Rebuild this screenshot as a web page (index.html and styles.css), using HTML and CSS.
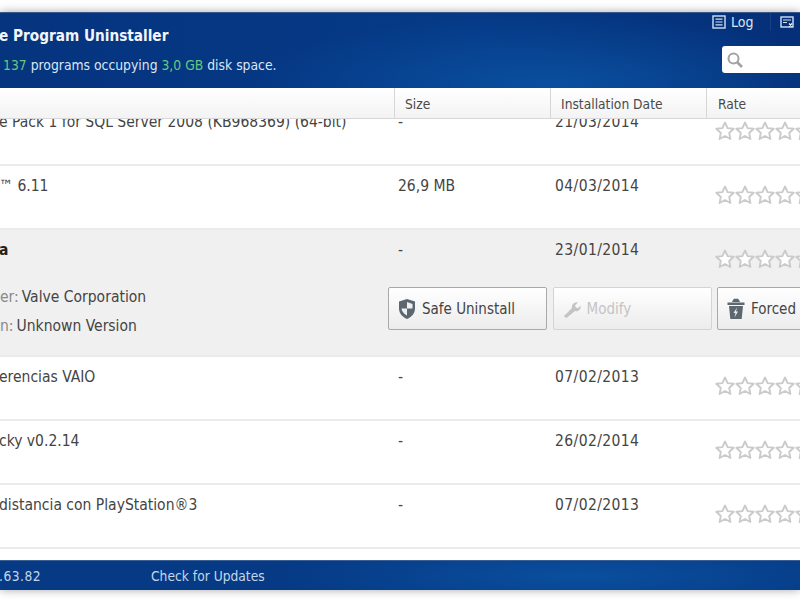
FILE: index.html
```html
<!DOCTYPE html>
<html lang="en">

<head>
    <meta charset="UTF-8">
    <title>Program Uninstaller</title>
    <link rel="stylesheet" href="styles.css">
</head>

<body>
    <svg class="sprites" width="0" height="0">
        <symbol id="star" viewBox="0 0 20 20">
            <path d="M10 1.500l2.600 5.600 6.100.7-4.500 4.200 1.200 6L10 15l-5.400 3 1.200-6-4.500-4.200 6.100-.7z" fill="#fff" stroke="#cbcbcb" stroke-width="1.900" stroke-linejoin="round" />
        </symbol>
    </svg>
    <div class="window">
        <header class="header">
            <div class="header-text">
                <h1>e Program Uninstaller</h1>
                <p><b>137</b> programs occupying <b>3,0 GB</b> disk space.</p>
            </div>
            <div class="header-tools">
                <div class="tool-links">
                    <span class="tool-link">
                        <svg width="14" height="14" viewBox="0 0 14 14">
                            <rect x="1" y="1" width="12" height="12" fill="none" stroke="#cfe0f2" stroke-width="1.400" />
                            <path d="M3.500 4.200h7M3.500 7h7M3.500 9.800h7" stroke="#cfe0f2" stroke-width="1.200" />
                        </svg>
                        Log
                    </span>
                    <span class="tool-sep"></span>
                    <svg width="14" height="13" viewBox="0 0 14 13">
                        <rect x="1" y="1" width="12" height="10" fill="none" stroke="#cfe0f2" stroke-width="1.400" />
                        <path d="M3 4h8M3 6.500h4" stroke="#cfe0f2" stroke-width="1.200" />
                        <path d="M9 7.500l3 3M12 7.500l-3 3" stroke="#fff" stroke-width="1.200" />
                    </svg>
                </div>
                <div class="search">
                    <svg width="18" height="18" viewBox="0 0 18 18">
                        <circle cx="7.500" cy="7.500" r="5" fill="none" stroke="#a3a3a3" stroke-width="2" />
                        <path d="M11 11l5 5" stroke="#a3a3a3" stroke-width="2.600" />
                    </svg>
                </div>
            </div>
        </header>

        <div class="columns">
            <div class="col-name"></div>
            <div class="col-head">Size</div>
            <div class="col-head">Installation Date</div>
            <div class="col-head">Rate</div>
        </div>

        <div class="list">
            <div class="row row-first">
                <div class="cell-name">e Pack 1 for SQL Server 2008 (KB968369) (64-bit)</div>
                <div class="cell-size">-</div>
                <div class="cell-date">21/03/2014</div>
                <div class="stars"><svg><use href="#star" /></svg><svg><use href="#star" /></svg><svg><use href="#star" /></svg><svg><use href="#star" /></svg><svg><use href="#star" /></svg></div>
            </div>
            <div class="row">
                <div class="cell-name">™ 6.11</div>
                <div class="cell-size">26,9 MB</div>
                <div class="cell-date">04/03/2014</div>
                <div class="stars"><svg><use href="#star" /></svg><svg><use href="#star" /></svg><svg><use href="#star" /></svg><svg><use href="#star" /></svg><svg><use href="#star" /></svg></div>
            </div>
            <div class="row row-open">
                <div class="cell-name cell-bold">a</div>
                <div class="cell-size">-</div>
                <div class="cell-date">23/01/2014</div>
                <div class="stars"><svg><use href="#star" /></svg><svg><use href="#star" /></svg><svg><use href="#star" /></svg><svg><use href="#star" /></svg><svg><use href="#star" /></svg></div>
                <div class="details">
                    <div><span class="label">er:</span>Valve Corporation</div>
                    <div><span class="label">n:</span>Unknown Version</div>
                </div>
                <div class="actions">
                    <button class="action">
                        <svg width="20" height="22" viewBox="0 0 20 22">
                            <path d="M10 1l8 2.500v7c0 5-3.500 8.500-8 10.500-4.500-2-8-5.500-8-10.500v-7z" fill="#5d6770" />
                            <path d="M10 4v6.500h5.500v-4.500zM10 10.500H4.500c.3 3 2.500 5.500 5.500 7z" fill="#eef0f1" />
                        </svg>
                        Safe Uninstall
                    </button>
                    <button class="action" disabled>
                        <svg width="20" height="22" viewBox="0 0 22 22">
                            <path d="M2 19l9-9c-.8-3 1.500-6.500 5.500-6.500l1 .3-3 3 .6 2.500 2.500.6 3-2.600c.4 4-3 6.700-6.300 6L5 21z" fill="#c4c4c4" />
                        </svg>
                        Modify
                    </button>
                    <button class="action">
                        <svg width="20" height="22" viewBox="0 0 20 22">
                            <path d="M1.500 4.500h17v2.500h-17zM7 2l1-1.200h4L13 2l1 2H6z" fill="#5d6770" />
                            <path d="M3 8h14l-1.300 13H4.300z" fill="#5d6770" />
                            <path d="M11 9.500l-3.500 5.500h2l-1 4.500 3.500-6h-2z" fill="#e8eaeb" />
                        </svg>
                        Forced
                    </button>
                </div>
            </div>
            <div class="row">
                <div class="cell-name">erencias VAIO</div>
                <div class="cell-size">-</div>
                <div class="cell-date">07/02/2013</div>
                <div class="stars"><svg><use href="#star" /></svg><svg><use href="#star" /></svg><svg><use href="#star" /></svg><svg><use href="#star" /></svg><svg><use href="#star" /></svg></div>
            </div>
            <div class="row">
                <div class="cell-name">cky v0.2.14</div>
                <div class="cell-size">-</div>
                <div class="cell-date">26/02/2014</div>
                <div class="stars"><svg><use href="#star" /></svg><svg><use href="#star" /></svg><svg><use href="#star" /></svg><svg><use href="#star" /></svg><svg><use href="#star" /></svg></div>
            </div>
            <div class="row">
                <div class="cell-name">distancia con PlayStation®3</div>
                <div class="cell-size">-</div>
                <div class="cell-date">07/02/2013</div>
                <div class="stars"><svg><use href="#star" /></svg><svg><use href="#star" /></svg><svg><use href="#star" /></svg><svg><use href="#star" /></svg><svg><use href="#star" /></svg></div>
            </div>
        </div>

        <footer class="footer">
            <span class="version">.63.82</span>
            <span>Check for Updates</span>
        </footer>
    </div>
</body>

</html>
```

FILE: styles.css
```css
body {
    margin: 0;
    height: 600px;
    overflow: hidden;
    background: #fff;
    font-family: "DejaVu Sans Condensed", "DejaVu Sans", sans-serif;
    font-stretch: condensed;
    font-size: 15.5px;
    color: #444;
}

.sprites {
    position: absolute;
}

.window {
    margin-top: 12px;
    width: 800px;
    box-shadow: 0 0 9px rgba(0, 0, 0, 0.35);
}

.header {
    display: flex;
    justify-content: space-between;
    height: 76px;
    box-sizing: border-box;
    border-top: 1px solid #3a5a8e;
    color: #dbe6f2;
    background: radial-gradient(ellipse 300px 70px at 550px 72px, #0a4f9e, rgba(10, 79, 158, 0)), linear-gradient(90deg, #06347f, #053a87 60%, #052f78);
}

.header-text {
    margin-left: -1px;
}

.header-text h1 {
    margin: 13px 0 0;
    font-size: 15.2px;
    line-height: 20px;
    color: #f2f6fb;
}

.header-text p {
    margin: 10px 0 0;
    font-size: 13.8px;
    line-height: 18px;
    padding-left: 4px;
}

.header-text b {
    font-weight: normal;
    color: #62c97f;
}

.header-tools {
    width: 88px;
    margin-right: -10px;
}

.tool-links {
    display: flex;
    align-items: center;
    height: 20px;
    margin-top: -1px;
    font-size: 14px;
}

.tool-link {
    display: flex;
    align-items: center;
    gap: 5px;
    margin-left: -10px;
}

.tool-sep {
    width: 1px;
    height: 18px;
    margin: 0 9px 0 17px;
    background: rgba(255, 255, 255, 0.08);
}

.search {
    display: flex;
    align-items: center;
    height: 27px;
    margin-top: 14px;
    padding-left: 4px;
    background: #fff;
    border-radius: 3px;
}

.columns {
    display: grid;
    grid-template-columns: 394px 156px 156px 94px;
    height: 31px;
    box-sizing: border-box;
    border-bottom: 1px solid #d8d8d8;
    background: linear-gradient(#fff, #f3f3f3);
}

.col-head {
    padding: 8px 0 0 10px;
    border-left: 1px solid #d6d6d6;
    color: #4a4a4a;
    font-size: 13.7px;
}

.col-head:last-child {
    padding-left: 11px;
}

.list {
    height: 441px;
    overflow: hidden;
}

.row {
    display: grid;
    grid-template-columns: 394px 157px 160px 89px;
    grid-template-rows: 64px;
    box-sizing: border-box;
    height: 64px;
    border-bottom: 2px solid #ebebeb;
    line-height: 18px;
}

.row-first {
    margin-top: -17px;
}

.row-open {
    grid-template-rows: 46px 81px;
    height: 127px;
    background: #f0f0f0;
}

.cell-name {
    padding-top: 11px;
    margin-left: -1px;
}

.cell-bold {
    font-weight: bold;
    color: #222;
}

.cell-size {
    padding: 11px 0 0 4px;
}

.cell-date {
    padding: 11px 0 0 4px;
    letter-spacing: 0.4px;
}

.stars {
    display: flex;
    padding: 19px 0 0 4px;
    width: 110px;
}

.stars svg {
    flex: none;
    width: 20px;
    height: 20px;
}

.details {
    display: flex;
    flex-direction: column;
    gap: 11px;
    padding-top: 12px;
    line-height: 18px;
}

.label {
    margin-right: 3px;
    color: #8a8a8a;
}

.actions {
    grid-column: 2 / 5;
    display: flex;
    gap: 5.5px;
    margin-left: -6px;
    padding-top: 11px;
    width: 420px;
}

.action {
    display: flex;
    flex: none;
    align-items: center;
    gap: 5px;
    width: 159px;
    height: 43px;
    padding: 0 8px;
    border: 1px solid #a9a9a9;
    border-radius: 2px;
    background: linear-gradient(#fff, #ececec);
    color: #444;
    font: inherit;
    font-size: 15px;
    font-stretch: condensed;
}

.action:disabled {
    border-color: #d4d4d4;
    color: #c4c4c4;
}

.footer {
    display: flex;
    align-items: center;
    height: 30px;
    box-sizing: border-box;
    border-top: 1px solid #3a5f96;
    background: radial-gradient(ellipse 300px 40px at 580px 15px, #0a4f9e, rgba(10, 79, 158, 0)), #063a85;
    color: #c3d6ea;
    font-size: 13.7px;
}

.version {
    width: 152px;
    margin-left: -1px;
    letter-spacing: 0.5px;
}
```
